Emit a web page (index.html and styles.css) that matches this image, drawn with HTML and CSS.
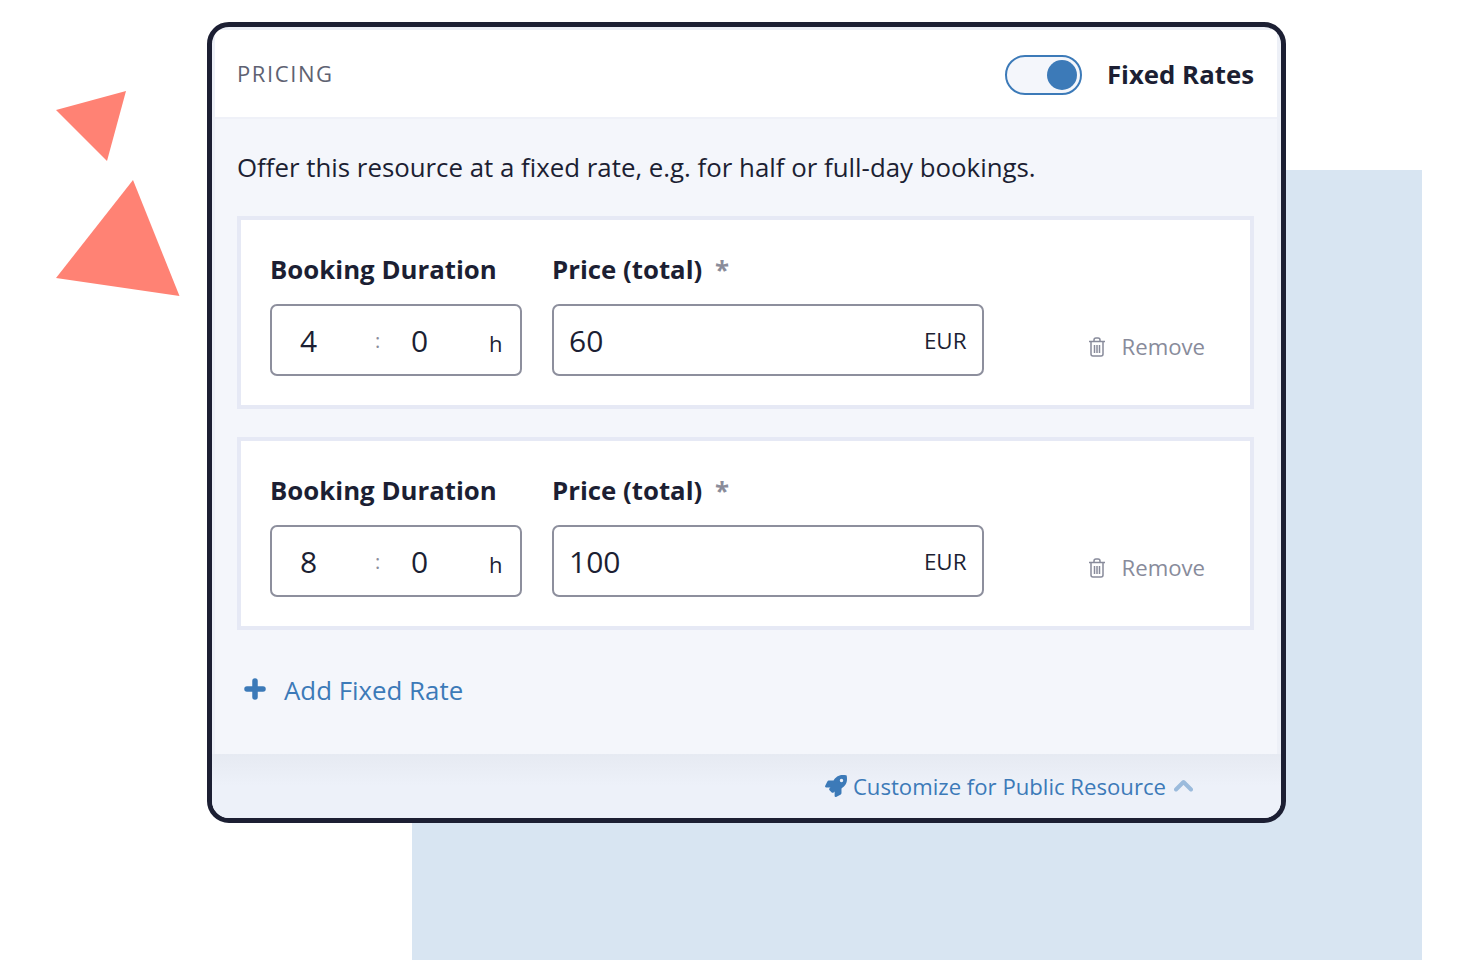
FILE: index.html
```html
<!DOCTYPE html>
<html lang="en">
<head>
<meta charset="utf-8">
<title>Pricing</title>
<link rel="stylesheet" href="styles.css">
</head>
<body>
<div class="backdrop"></div>
<svg class="shapes" width="200" height="310" viewBox="0 0 200 310"><polygon points="56,110 126,91 107,161"/><polygon points="133,180 56,278 179.500,296"/></svg>
<main class="card">
  <header class="head">
    <span class="eyebrow">PRICING</span>
    <div class="head-right">
      <span class="toggle"><span class="knob"></span></span>
      <strong class="head-title">Fixed Rates</strong>
    </div>
  </header>
  <section class="body">
    <p class="intro">Offer this resource at a fixed rate, e.g. for half or full-day bookings.</p>
    <div class="rate">
      <div class="field dur">
        <label class="lbl">Booking Duration</label>
        <div class="box dbox"><span class="d1">4</span><span class="colon">:</span><span class="d2">0</span><span class="unit">h</span></div>
      </div>
      <div class="field price">
        <label class="lbl">Price (total) <span class="star">*</span></label>
        <div class="box pbox"><span>60</span><span class="cur">EUR</span></div>
      </div>
      <a class="remove"><svg class="trash" width="18" height="20" viewBox="0 0 18 20"><path d="M1 4.500h16M3 4.500v12.500a2 2 0 0 0 2 2h8a2 2 0 0 0 2-2V4.500M6 4.500V3a2 2 0 0 1 2-2h2a2 2 0 0 1 2 2v1.500M6.500 8v8M9 8v8M11.500 8v8"/></svg>Remove</a>
    </div>
    <div class="rate">
      <div class="field dur">
        <label class="lbl">Booking Duration</label>
        <div class="box dbox"><span class="d1">8</span><span class="colon">:</span><span class="d2">0</span><span class="unit">h</span></div>
      </div>
      <div class="field price">
        <label class="lbl">Price (total) <span class="star">*</span></label>
        <div class="box pbox"><span>100</span><span class="cur">EUR</span></div>
      </div>
      <a class="remove"><svg class="trash" width="18" height="20" viewBox="0 0 18 20"><path d="M1 4.500h16M3 4.500v12.500a2 2 0 0 0 2 2h8a2 2 0 0 0 2-2V4.500M6 4.500V3a2 2 0 0 1 2-2h2a2 2 0 0 1 2 2v1.500M6.500 8v8M9 8v8M11.500 8v8"/></svg>Remove</a>
    </div>
    <a class="add"><svg width="22" height="22" viewBox="0 0 22 22"><path d="M11 3v16M3 11h16"/></svg>Add Fixed Rate</a>
  </section>
  <footer class="foot">
    <a class="custom">
      <svg class="rocket" width="22" height="22" viewBox="0 0 512 512"><path d="M505.12019,19.09375c-1.18945-5.53125-6.65819-11-12.207-12.1875C460.716,0,435.507,0,410.40747,0,307.17523,0,245.26909,55.20312,199.05238,128H94.83772c-16.34763.01562-35.55658,11.875-42.88664,26.48438L2.51562,253.29688A28.4,28.4,0,0,0,0,264a24.00867,24.00867,0,0,0,24.00582,24H127.81618l-22.47457,22.46875c-11.36521,11.36133-12.99607,32.25781,0,45.25L156.24582,406.625c11.15623,11.1875,32.15619,13.15625,45.27726,0l22.47457-22.46875V488a24.00867,24.00867,0,0,0,24.00581,24,28.55934,28.55934,0,0,0,10.707-2.51562l98.72834-49.39063c14.62888-7.29687,26.50776-26.5,26.50776-42.85937V312.79688c72.59753-46.3125,128.03493-108.40626,128.03493-211.09376C512.07526,76.5,512.07526,51.29688,505.12019,19.09375ZM384.04033,168A40,40,0,1,1,424.05,128,40.02322,40.02322,0,0,1,384.04033,168Z"/></svg>
      <span class="custom-text">Customize for Public Resource</span>
      <svg class="chev" width="19" height="13" viewBox="0 0 19 13"><path d="M2 10.500 9.500 3l7.500 7.500"/></svg>
    </a>
  </footer>
</main>
</body>
</html>
```
FILE: styles.css
```css
* { box-sizing: border-box; }
html, body { margin: 0; height: 100%; }
body {
  position: relative;
  height: 960px;
  overflow: hidden;
  background: #fff;
  font-family: "Open Sans", "Noto Sans", sans-serif;
  color: #1c1f33;
  padding: 22px 0 0 207px;
}
.backdrop { position: absolute; left: 412px; top: 170px; width: 1010px; height: 790px; background: #d8e5f2; }
.shapes { position: absolute; left: 0; top: 0; fill: #ff8274; }
.card {
  position: relative;
  width: 1079px;
  height: 801px;
  border: 5px solid #1c1f33;
  border-radius: 22px;
  background: #edf0f7;
  padding-top: 3px;
  display: flex;
  flex-direction: column;
  overflow: hidden;
}
.head {
  height: 89px;
  flex: none;
  margin: 0 4px 0 3px;
  padding: 0 23px 0 22px;
  border-bottom: 2px solid #eff1f8;
  background: #fff;
  display: flex;
  align-items: center;
  justify-content: space-between;
}
.eyebrow { font-size: 22px; letter-spacing: 1.6px; color: #5e6272; margin-bottom: 2px; }
.head-right { display: flex; align-items: center; gap: 25px; padding-top: 3px; }
.toggle {
  width: 77px; height: 40px;
  border: 2px solid #3c7ab8;
  border-radius: 20px;
  background: #f4f6fb;
  display: flex; align-items: center; justify-content: flex-end;
  padding-right: 3px;
}
.knob { width: 30px; height: 30px; border-radius: 50%; background: #3c7ab8; }
.head-title { font-size: 25.8px; font-weight: 700; margin-bottom: 2px; }
.body {
  flex: 1;
  margin: 0 4px 0 3px;
  padding: 30px 23px 0 22px;
  background: #f4f6fb;
  display: flex;
  flex-direction: column;
}
.intro { margin: 0 0 31px; font-size: 25.84px; line-height: 36px; }
.rate {
  height: 193px;
  border: 4px solid #e6e9f5;
  background: #fff;
  margin-bottom: 28px;
  padding: 32px 0 0 29px;
  display: flex;
  align-items: flex-start;
}
.field { display: flex; flex-direction: column; }
.dur { width: 252px; margin-right: 30px; }
.price { width: 431.5px; }
.lbl { font-size: 25.8px; font-weight: 700; line-height: 34px; margin-bottom: 18px; white-space: nowrap; }
.star { color: #8a8c9a; margin-left: 6px; }
.box {
  height: 72px;
  border: 2px solid #8d8f9d;
  border-radius: 7px;
  background: #fff;
  display: flex;
  align-items: center;
  font-size: 30px;
}
.dbox { padding-left: 28px; }
.d1 { width: 75px; }
.colon { width: 36px; font-size: 20px; color: #8a8c9a; }
.d2 { width: 78px; }
.unit { font-size: 22px; padding-top: 6px; }
.pbox { justify-content: space-between; padding: 0 15px; }
.cur { font-size: 22.4px; }
.remove {
  margin: 79px 0 0 104px;
  display: flex; align-items: center; gap: 16px;
  font-size: 22.2px; color: #888b9b;
}
.trash { fill: none; stroke: #888b9b; stroke-width: 1.5; }
.add {
  margin: 14px 0 0 7px;
  display: flex; align-items: center; gap: 18px;
  font-size: 25.85px; color: #3c7ab8;
}
.add svg { margin-bottom: 2px; fill: none; stroke: #3c7ab8; stroke-width: 5.500; stroke-linecap: round; }
.foot {
  height: 64px; flex: none;
  background: linear-gradient(#e6eaf2, #edf1f9 50%);
  display: flex; align-items: center; justify-content: flex-end;
  padding: 0 88px 1px 0;
}
.custom { display: flex; align-items: center; gap: 6px; font-size: 22.15px; color: #3c7ab8; }
.chev { margin-left: 2px; }
.rocket { fill: #3c7ab8; }
.chev { fill: none; stroke: #9bbbdc; stroke-width: 4; stroke-linecap: round; stroke-linejoin: round; }
```
